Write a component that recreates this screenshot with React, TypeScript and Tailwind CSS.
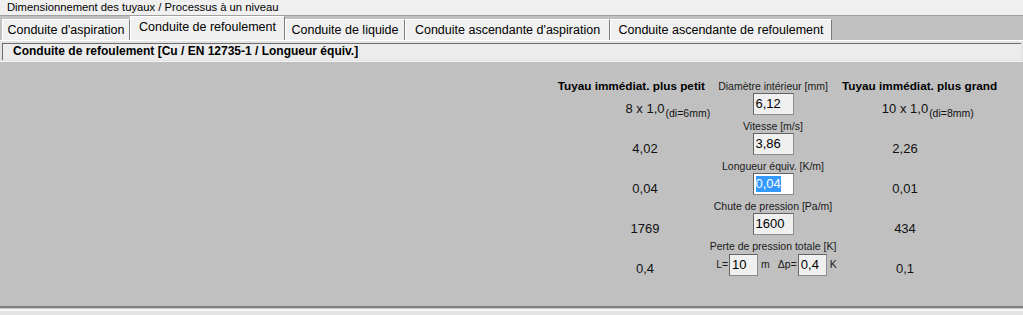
import React from "react";

const tabs = [
  { label: "Conduite d'aspiration", w: "w-[128px]", active: false },
  { label: "Conduite de refoulement", w: "w-[155px]", active: true },
  { label: "Conduite de liquide", w: "w-[120px]", active: false },
  { label: "Conduite ascendante d'aspiration", w: "w-[205px]", active: false },
  { label: "Conduite ascendante de refoulement", w: "w-[222px]", active: false },
];

function Box({ children, w = "w-[41px]", selected = false }: { children: React.ReactNode; w?: string; selected?: boolean }) {
  return (
    <div
      className={`${w} h-[22px] border border-t-[#646464] border-l-[#646464] border-r-[#8c8c8c] border-b-[#8c8c8c] ${
        selected ? "bg-white" : "bg-[#f0f0f0]"
      } pl-[2px] pt-[1px] text-[13px] leading-[17px] text-black whitespace-nowrap`}
    >
      {selected ? <span className="bg-[#3399ff] text-white inline-block leading-[16px]">{children}</span> : children}
    </div>
  );
}

const COLS = "grid grid-cols-[170px_86px_178px]";

function Row({
  label,
  left,
  right,
  center,
  headers = false,
}: {
  label: string;
  left: React.ReactNode;
  right: React.ReactNode;
  center: React.ReactNode;
  headers?: boolean;
}) {
  return (
    <div className="flex flex-col">
      <div className={`${COLS} h-[14px] items-center`}>
        <div className="flex justify-end pr-[25px] whitespace-nowrap text-[11.75px] font-bold text-black leading-[14px]">
          {headers ? "Tuyau immédiat. plus petit" : ""}
        </div>
        <div className="flex justify-center whitespace-nowrap text-[10.5px] text-[#1a1a1a] leading-[14px]">{label}</div>
        <div className="flex justify-start pl-[26px] whitespace-nowrap text-[11.75px] font-bold text-black leading-[14px]">
          {headers ? "Tuyau immédiat. plus grand" : ""}
        </div>
      </div>
      <div className={`${COLS} h-[22px] mb-[4px]`}>
        <div className="flex justify-center items-start text-[13px] leading-[16px] text-[#111] pt-[8px]">{left}</div>
        <div className="flex justify-center">{center}</div>
        <div className="flex justify-center items-start text-[13px] leading-[16px] text-[#111] pt-[8px]">{right}</div>
      </div>
    </div>
  );
}

function Pipe({ main, sub }: { main: string; sub: string }) {
  return (
    <span className="relative whitespace-nowrap">
      {main}
      <span className="absolute left-full top-[5px] pl-[1px] text-[10.5px] leading-[14px]">{sub}</span>
    </span>
  );
}

export default function App() {
  return (
    <div className="w-[1023px] h-[315px] bg-[#c0c0c0] flex flex-col overflow-hidden font-['Liberation_Sans',Arial,sans-serif] text-black">
      {/* Title bar */}
      <div className="h-[16px] bg-[#f0f0f0] border-b border-[#a0a0a0] pl-[7px] text-[11.25px] leading-[15px] text-black shrink-0">
        Dimensionnement des tuyaux / Processus à un niveau
      </div>
      {/* Tabs */}
      <div className="h-[25px] flex items-end pl-[2px] bg-[#c0c0c0] border-b border-white shrink-0">
        {tabs.map((t) => (
          <div
            key={t.label}
            className={`${t.w} ${
              t.active ? "h-[24px] pb-[2px]" : "h-[21px] pt-[1px]"
            } bg-[#f0f0f0] border-t border-l border-t-white border-l-white border-r border-r-[#7a7a7a] flex items-center justify-center text-[12.5px] text-black whitespace-nowrap`}
          >
            {t.label}
          </div>
        ))}
      </div>
      {/* Sub header */}
      <div className="h-[21px] bg-[#e3e3e3] pt-[2px] pl-[2px] pr-[2px] border-b border-[#f4f4f4] shrink-0">
        <div className="h-[17px] bg-[#ececec] border-t border-l border-[#6e6e6e] pl-[10px] text-[12px] font-bold leading-[15px] text-black whitespace-nowrap">
          Conduite de refoulement [Cu / EN 12735-1 / Longueur équiv.]
        </div>
      </div>
      {/* Body */}
      <div className="flex-1 pt-[17px] pl-[560px]">
        <Row
          headers
          label="Diamètre intérieur [mm]"
          left={<Pipe main="8 x 1,0" sub="(di=6mm)" />}
          center={<Box>6,12</Box>}
          right={<Pipe main="10 x 1,0" sub="(di=8mm)" />}
        />
        <Row label="Vitesse [m/s]" left="4,02" center={<Box>3,86</Box>} right="2,26" />
        <Row label="Longueur équiv. [K/m]" left="0,04" center={<Box selected>0,04</Box>} right="0,01" />
        <Row label="Chute de pression [Pa/m]" left="1769" center={<Box>1600</Box>} right="434" />
        <Row
          label="Perte de pression totale [K]"
          left="0,4"
          center={
            <div className="flex items-center ml-[7px] whitespace-nowrap text-[10.5px] text-[#1a1a1a]">
              <span className="mr-[1px]">L=</span>
              <Box w="w-[29px]">10</Box>
              <span className="ml-[3px] mr-[8px]">m</span>
              <span className="mr-[1px]">Δp=</span>
              <Box w="w-[29px]">0,4</Box>
              <span className="ml-[3px]">K</span>
            </div>
          }
          right="0,1"
        />
      </div>
      {/* Bottom edges */}
      <div className="h-[2px] bg-[#808080] shrink-0" />
      <div className="h-[1px] bg-[#c8c8c8] shrink-0" />
      <div className="h-[2px] bg-[#f6f6f6] shrink-0" />
      <div className="h-[4px] bg-[#e4e4e4] shrink-0" />
    </div>
  );
}
